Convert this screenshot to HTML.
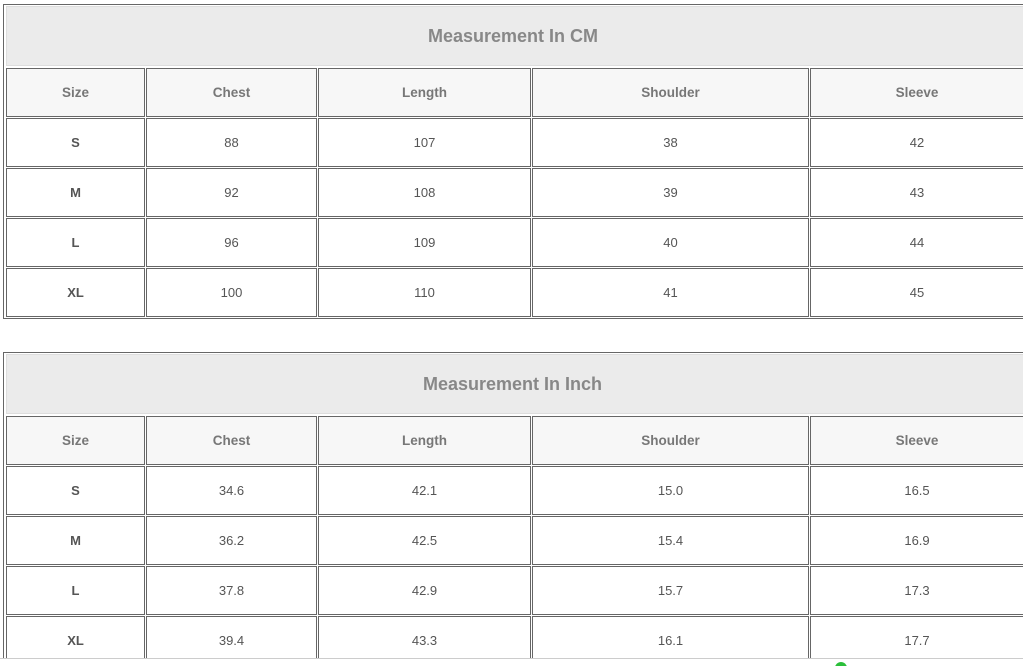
<!DOCTYPE html>
<html style="overflow:hidden;height:666px"><head><meta charset="utf-8"><style>
body{margin:0;width:1023px;height:666px;overflow:hidden;background:#fff;font-family:"Liberation Sans",Arial,sans-serif;position:relative}
.o{position:absolute;left:3px;width:1030px;border:1px solid #666;box-sizing:border-box}
.t{position:absolute;left:6px;width:1030px;height:60px;background:#ebebeb;border:1px solid #ddd;box-sizing:border-box;font-weight:bold;font-size:18px;color:#888;line-height:58px}
.c{position:absolute;border:1px solid #666;box-sizing:border-box;height:49px;line-height:47px;text-align:center;font-size:13px;color:#555}
.h{background:#f7f7f7;font-weight:bold;color:#777;font-size:13.5px}
.b{font-weight:bold}
</style></head><body>
<div class="o" style="top:4px;height:315px"></div>
<div class="t" style="top:6px"><span style="position:absolute;left:421px">Measurement In CM</span></div>
<div class="o" style="top:352px;height:310px"></div>
<div class="t" style="top:354px"><span style="position:absolute;left:416px">Measurement In Inch</span></div>
<div id="g"></div>
<div style="position:absolute;left:0;top:658px;width:1023px;height:8px;background:#fff;border-top:1px solid #ccc;overflow:hidden"><div style="position:absolute;left:835px;top:3px;width:12px;height:12px;border-radius:50%;background:#2bbf3a"></div></div>
<script>
var xs=[6,146,318,532,810],ws=[139,171,213,277,214];
var d=[[["Size","Chest","Length","Shoulder","Sleeve"],["S","88","107","38","42"],["M","92","108","39","43"],["L","96","109","40","44"],["XL","100","110","41","45"]],
[["Size","Chest","Length","Shoulder","Sleeve"],["S","34.6","42.1","15.0","16.5"],["M","36.2","42.5","15.4","16.9"],["L","37.8","42.9","15.7","17.3"],["XL","39.4","43.3","16.1","17.7"]]];
var tops=[68,416],h="";
for(var t=0;t<2;t++)for(var r=0;r<5;r++)for(var c=0;c<5;c++){
var cls="c"+(r==0?" h":"")+(r>0&&c==0?" b":"");
h+='<div class="'+cls+'" style="left:'+xs[c]+'px;top:'+(tops[t]+r*50)+'px;width:'+ws[c]+'px">'+d[t][r][c]+'</div>';}
document.getElementById("g").innerHTML=h;
</script>
</body></html>
